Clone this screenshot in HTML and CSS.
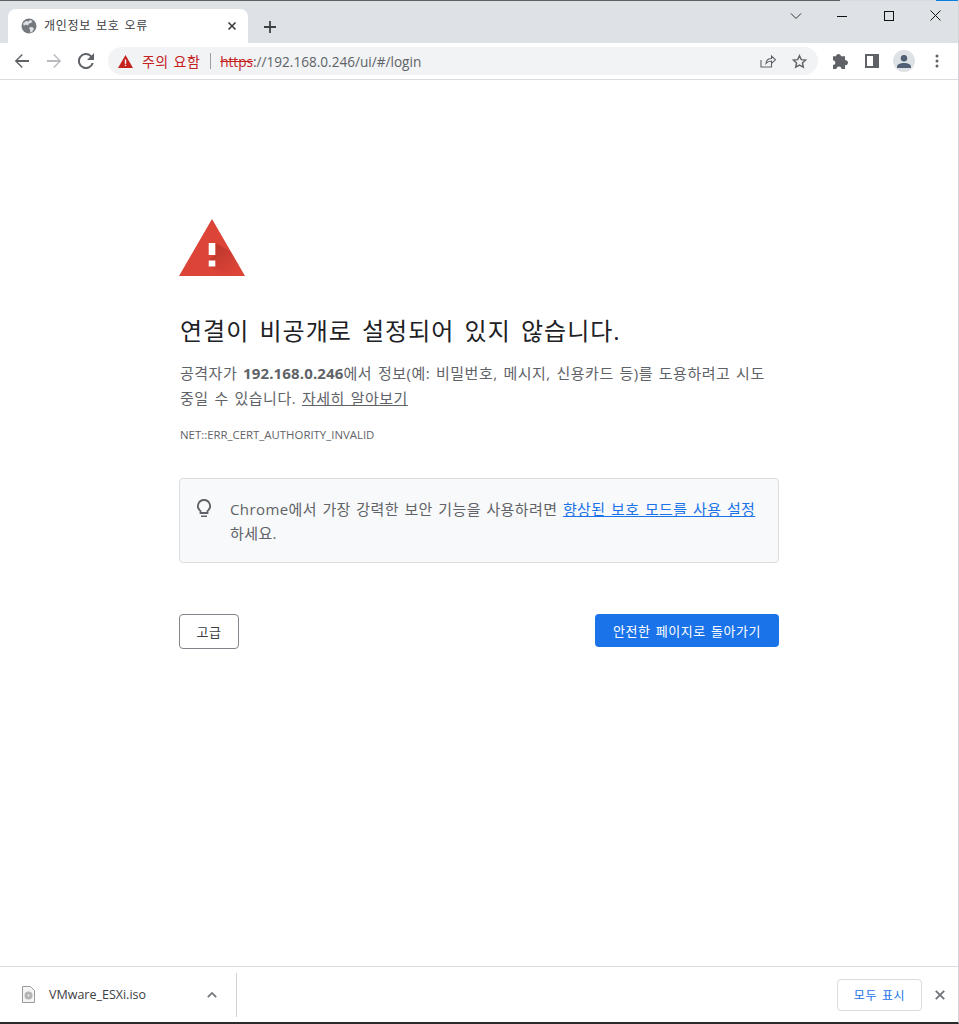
FILE: index.html
```html
<!DOCTYPE html>
<html lang="ko">
<head>
<meta charset="utf-8">
<title>개인정보 보호 오류</title>
<link rel="stylesheet" href="styles.css">
</head>
<body>
<div class="window">
  <div class="edge"><span class="edge-dark"></span><span class="edge-light"></span><span class="edge-blue"></span></div>
  <header class="tabstrip">
    <div class="tab">
      <svg class="globe" width="16" height="16" viewBox="0 0 16 16"><circle cx="8" cy="8" r="7.5" fill="#757a7f"/><path d="M2 5.5 5 3l2.5.5L9 2l2.5 1L10 5 8 5.5 7 7.5 4.5 6.5 3 8ZM8 9.5l3-.5 2 1.5-1.5 3L9.5 15 9 12Z" fill="#dee1e6"/></svg>
      <span class="tab-title">개인정보 보호 오류</span>
      <svg class="tab-close" width="10" height="10" viewBox="0 0 10 10"><path d="M1.5 1.5l7 7M8.500 1.500l-7 7" stroke="#3c4043" stroke-width="1.700"/></svg>
    </div>
    <svg class="newtab" width="12" height="12" viewBox="0 0 12 12"><path d="M6 0v12M0 6h12" stroke="#3c4043" stroke-width="1.800"/></svg>
    <div class="winbtns">
      <svg width="12" height="8" viewBox="0 0 12 8"><path d="M1 1.500l5 5 5-5" fill="none" stroke="#333" stroke-width="1"/></svg>
      <svg class="win-min" width="10" height="10" viewBox="0 0 10 10"><path d="M0 5.500h10" stroke="#111" stroke-width="1"/></svg>
      <svg class="win-max" width="10" height="10" viewBox="0 0 10 10"><rect x=".5" y=".5" width="9" height="9" fill="none" stroke="#111"/></svg>
      <svg class="win-close" width="11" height="11" viewBox="0 0 11 11"><path d="M.5.500l10 10M10.500.500l-10 10" stroke="#111" stroke-width="1"/></svg>
    </div>
  </header>
  <nav class="toolbar">
    <svg class="nav" width="16" height="16" viewBox="0 0 16 16"><path d="M15 7H3.800l5-5L7.800 1 .8 8l7 7 1-1-5-5H15Z" fill="#5f6368"/></svg>
    <svg class="nav" width="16" height="16" viewBox="0 0 16 16"><path d="M1 7h11.200l-5-5 1-1 7 7-7 7-1-1 5-5H1Z" fill="#b8babd"/></svg>
    <svg class="nav" width="16" height="16" viewBox="0 0 16 16"><path d="M13.600 2.400A8 8 0 1 0 15.700 10h-2.100A6 6 0 1 1 8 2c1.700 0 3.100.7 4.200 1.800L9 7h7V0Z" fill="#5f6368"/></svg>
    <div class="omnibox">
      <svg class="warn" width="15" height="13" viewBox="0 0 15 13"><path d="M7.500 0 15 13H0Z" fill="#c5221f"/><path d="M6.800 4.500h1.400v4.200H6.800zM6.800 9.700h1.400v1.400H6.800z" fill="#fff"/></svg>
      <span class="warn-text">주의 요함</span>
      <span class="sep"></span>
      <span class="url"><s class="scheme">https</s>://192.168.0.246/ui/#/login</span>
      <span class="spacer"></span>
      <svg class="omni-icon" width="16" height="14" viewBox="0 0 16 14"><path d="M1 6v7h10.500v-3M6 9.500c.3-3 2.500-5 5.500-5V2L15.500 5.800l-4 3.700V7C9 7 7.500 7.800 6 9.500Z" fill="none" stroke="#5f6368" stroke-width="1.100"/></svg>
      <svg class="omni-icon star" width="15" height="15" viewBox="0 0 16 16"><path d="M8 1.800 9.900 6l4.600.5-3.400 3.100 1 4.500L8 11.800l-4.100 2.300 1-4.500L1.500 6.500 6.100 6Z" fill="none" stroke="#5f6368" stroke-width="1.500"/></svg>
    </div>
    <svg class="ext" width="15" height="15" viewBox="0 0 15 15"><path d="M5.500 0C6.900 0 8 1 8 2.300h4v3.800C13.500 6.100 15 7 15 8.700s-1.500 2.600-3 2.600V15H8.500c0-1.500-.9-2.500-2.500-2.500S3.500 13.500 3.500 15H0v-4c1.300 0 2.300-1 2.300-2.300S1.300 6.300 0 6.300V2.300h3C3 1 4 0 5.500 0Z" fill="#5f6368"/></svg>
    <svg class="panel" width="14" height="14" viewBox="0 0 14 14"><path d="M0 0h14v14H0Zm2 2v10h6V2Z" fill="#5f6368" fill-rule="evenodd"/></svg>
    <div class="avatar"><svg width="14" height="13" viewBox="0 0 14 13"><circle cx="7" cy="3.300" r="3.200" fill="#515f74"/><path d="M0 13v-1.500C0 9.300 3.500 8 7 8s7 1.300 7 3.500V13Z" fill="#515f74"/></svg></div>
    <svg class="menu" width="4" height="14" viewBox="0 0 4 14"><circle cx="2" cy="2" r="1.500" fill="#5f6368"/><circle cx="2" cy="7" r="1.500" fill="#5f6368"/><circle cx="2" cy="12" r="1.500" fill="#5f6368"/></svg>
  </nav>
  <main class="page">
    <div class="content">
      <svg class="alert" width="66" height="57" viewBox="0 0 66 57">
        <defs>
          <linearGradient id="alert-shadow" x1="0.150" y1="0.150" x2="0.750" y2="0.850">
            <stop offset="0" stop-color="#a52d22" stop-opacity=".55"/>
            <stop offset="1" stop-color="#a52d22" stop-opacity="0"/>
          </linearGradient>
        </defs>
        <path d="M33 0 66 57H0Z" fill="#db4437"/>
        <path d="M36.300 24 52 33 62 50 50 57 29.700 47.500V41 L36.300 36Z" fill="url(#alert-shadow)"/>
        <path d="M29.700 24h6.600v12h-6.600zM29.700 41.500h6.600v6h-6.600z" fill="#fff"/>
      </svg>
      <h1>연결이 비공개로 설정되어 있지 않습니다.</h1>
      <p class="desc">공격자가 <strong>192.168.0.246</strong>에서 정보(예: 비밀번호, 메시지, 신용카드 등)를 도용하려고 시도 중일 수 있습니다. <a class="learn" href="#">자세히 알아보기</a></p>
      <div class="code">NET::ERR_CERT_AUTHORITY_INVALID</div>
      <div class="tip">
        <svg class="bulb" width="14" height="19" viewBox="0 0 14 19"><path d="M7 1a6 6 0 0 0-3.500 10.900V14h7v-2.100A6 6 0 0 0 7 1Z" fill="none" stroke="#5f6368" stroke-width="1.800"/><path d="M4 16.500h6v1.500H4z" fill="#5f6368"/></svg>
        <p class="tip-text">Chrome에서 가장 강력한 보안 기능을 사용하려면 <a class="tip-link" href="#">향상된 보호 모드를 사용 설정</a>하세요.</p>
      </div>
      <div class="actions">
        <button class="btn-advanced">고급</button>
        <button class="btn-back">안전한 페이지로 돌아가기</button>
      </div>
    </div>
  </main>
  <footer class="shelf">
    <div class="dl-item">
      <svg class="file" width="13" height="17" viewBox="0 0 13 17"><path d="M.5.500h8l4 4v12H.5Z" fill="#f5f5f5" stroke="#9a9a9a"/><circle cx="6.500" cy="9.500" r="4" fill="#b5b5b5"/><circle cx="6.500" cy="9.500" r="1" fill="#eee"/></svg>
      <span class="dl-name">VMware_ESXi.iso</span>
      <svg class="dl-caret" width="10" height="6" viewBox="0 0 10 6"><path d="M.8 5.200 5 1l4.200 4.200" fill="none" stroke="#70757a" stroke-width="1.700"/></svg>
    </div>
    <span class="spacer"></span>
    <button class="show-all">모두 표시</button>
    <svg class="shelf-close" width="10" height="10" viewBox="0 0 10 10"><path d="M.8.800l8.400 8.400M9.200.800.8 9.200" stroke="#70757a" stroke-width="1.900"/></svg>
  </footer>
</div>
</body>
</html>
```
FILE: styles.css
```css
* { box-sizing: border-box; }
html, body { margin: 0; height: 100%; background: #fff; }
body { font-family: "Open Sans", "Noto Sans CJK KR", sans-serif; overflow: hidden; }
.window { height: 1024px; display: flex; flex-direction: column; border-bottom: 2px solid #2b2b2b; border-right: 1px solid #d0d2d5; }
.edge { height: 1px; display: flex; flex: none; }
.edge-dark { width: 840px; background: #5f6163; }
.edge-light { width: 96px; background: #d8dadd; }
.edge-blue { flex: 1; background: #0a7fdc; }
.tabstrip { height: 42px; flex: none; background: #dee1e6; display: flex; align-items: flex-end; padding-left: 8px; position: relative; }
.tab { width: 240px; height: 34px; background: #fff; border-radius: 8px 8px 0 0; display: flex; align-items: center; padding: 0 11px 0 13px; }
.globe { flex: none; margin-right: 7px; }
.tab-title { flex: 1; font-size: 12px; line-height: 15px; margin-bottom: 2px; color: #3c4043; letter-spacing: .75px; word-spacing: 1px; }
.tab-close { flex: none; }
.newtab { margin: 0 0 10px 16px; }
.winbtns { position: absolute; top: 9px; right: 17px; display: flex; align-items: center; }
.win-min { margin-left: 35px; }
.win-max { margin-left: 37px; }
.win-close { margin-left: 36px; }
.toolbar { height: 37px; flex: none; background: #fff; border-bottom: 1px solid #dadce0; display: flex; align-items: center; padding: 0 14px 0 14px; }
.nav { margin-right: 16px; flex: none; }
.nav:nth-child(3) { margin-right: 14px; }
.omnibox { width: 710px; height: 28px; margin-right: 15px; background: #f1f3f4; border-radius: 14px; display: flex; align-items: center; padding: 0 11px 0 10px; flex: none; }
.warn { flex: none; }
.warn-text { margin-left: 9px; font-size: 14px; color: #c5221f; letter-spacing: .4px; word-spacing: 1px; }
.sep { width: 1px; height: 16px; background: #9aa0a6; margin: 0 9px 0 10px; }
.url { font-size: 13.600px; color: #5f6368; }
.scheme { color: #c5221f; }
.spacer { flex: 1; }
.omni-icon { flex: none; }
.star { margin-left: 16px; }
.ext { flex: none; }
.panel { flex: none; margin-left: 17px; }
.avatar { width: 22px; height: 22px; border-radius: 50%; background: #dee1e6; display: flex; align-items: center; justify-content: center; margin-left: 14px; flex: none; }
.menu { flex: none; margin-left: 20px; }
.page { flex: 1; min-height: 0; padding: 139px 0 0 179px; }
.content { width: 600px; }
.alert { display: block; }
h1 { margin: 37px 0 0 1px; font-size: 24px; line-height: 36px; font-weight: 400; color: #202124; white-space: nowrap; letter-spacing: 1px; word-spacing: 3px; }
.desc { margin: 12px 0 0 1px; font-size: 15px; line-height: 25px; color: #5f6368; width: 590px; letter-spacing: .5px; word-spacing: 1.400px; }
.desc strong { font-weight: 700; letter-spacing: .15px; }
.learn { color: #5f6368; text-decoration: underline; }
.code { margin: 16px 0 0 1px; font-size: 11.400px; line-height: 16px; color: #5f6368; }
.tip { margin-top: 35px; height: 85px; background: #f8f9fa; border: 1px solid #dadce0; border-radius: 4px; display: flex; padding: 18px 16px 0 16px; }
.bulb { flex: none; margin: 2px 19px 0 1px; }
.tip-text { margin: 0; font-size: 15px; line-height: 24px; color: #5f6368; width: 535px; letter-spacing: .4px; word-spacing: 1.200px; }
.tip-link { color: #1a73e8; text-decoration: underline; }
.actions { margin-top: 51px; display: flex; justify-content: space-between; align-items: flex-start; }
.btn-advanced { width: 60px; height: 35px; background: #fff; border: 1px solid #80868b; border-radius: 4px; font: 13px "Open Sans", "Noto Sans CJK KR", sans-serif; color: #3c4043; padding: 0; letter-spacing: .5px; }
.btn-back { width: 184px; height: 33px; background: #1a73e8; border: 0; border-radius: 4px; font: 13px "Open Sans", "Noto Sans CJK KR", sans-serif; color: #fff; padding: 0; letter-spacing: .5px; word-spacing: 1.500px; }
.shelf { height: 56px; flex: none; background: #fff; border-top: 1px solid #dadce0; display: flex; align-items: center; padding: 0 13px 0 22px; }
.dl-item { width: 215px; height: 44px; border-right: 1px solid #d0d2d5; display: flex; align-items: center; flex: none; }
.file { flex: none; margin-right: 14px; }
.dl-name { flex: none; font-size: 12.500px; color: #3c4043; width: 158px; }
.dl-caret { flex: none; }
.show-all { width: 85px; height: 32px; background: #fff; border: 1px solid #dadce0; border-radius: 4px; font: 12px "Open Sans", "Noto Sans CJK KR", sans-serif; color: #1a73e8; letter-spacing: .5px; word-spacing: 1.500px; padding: 0; }
.shelf-close { flex: none; margin-left: 13px; }
```
